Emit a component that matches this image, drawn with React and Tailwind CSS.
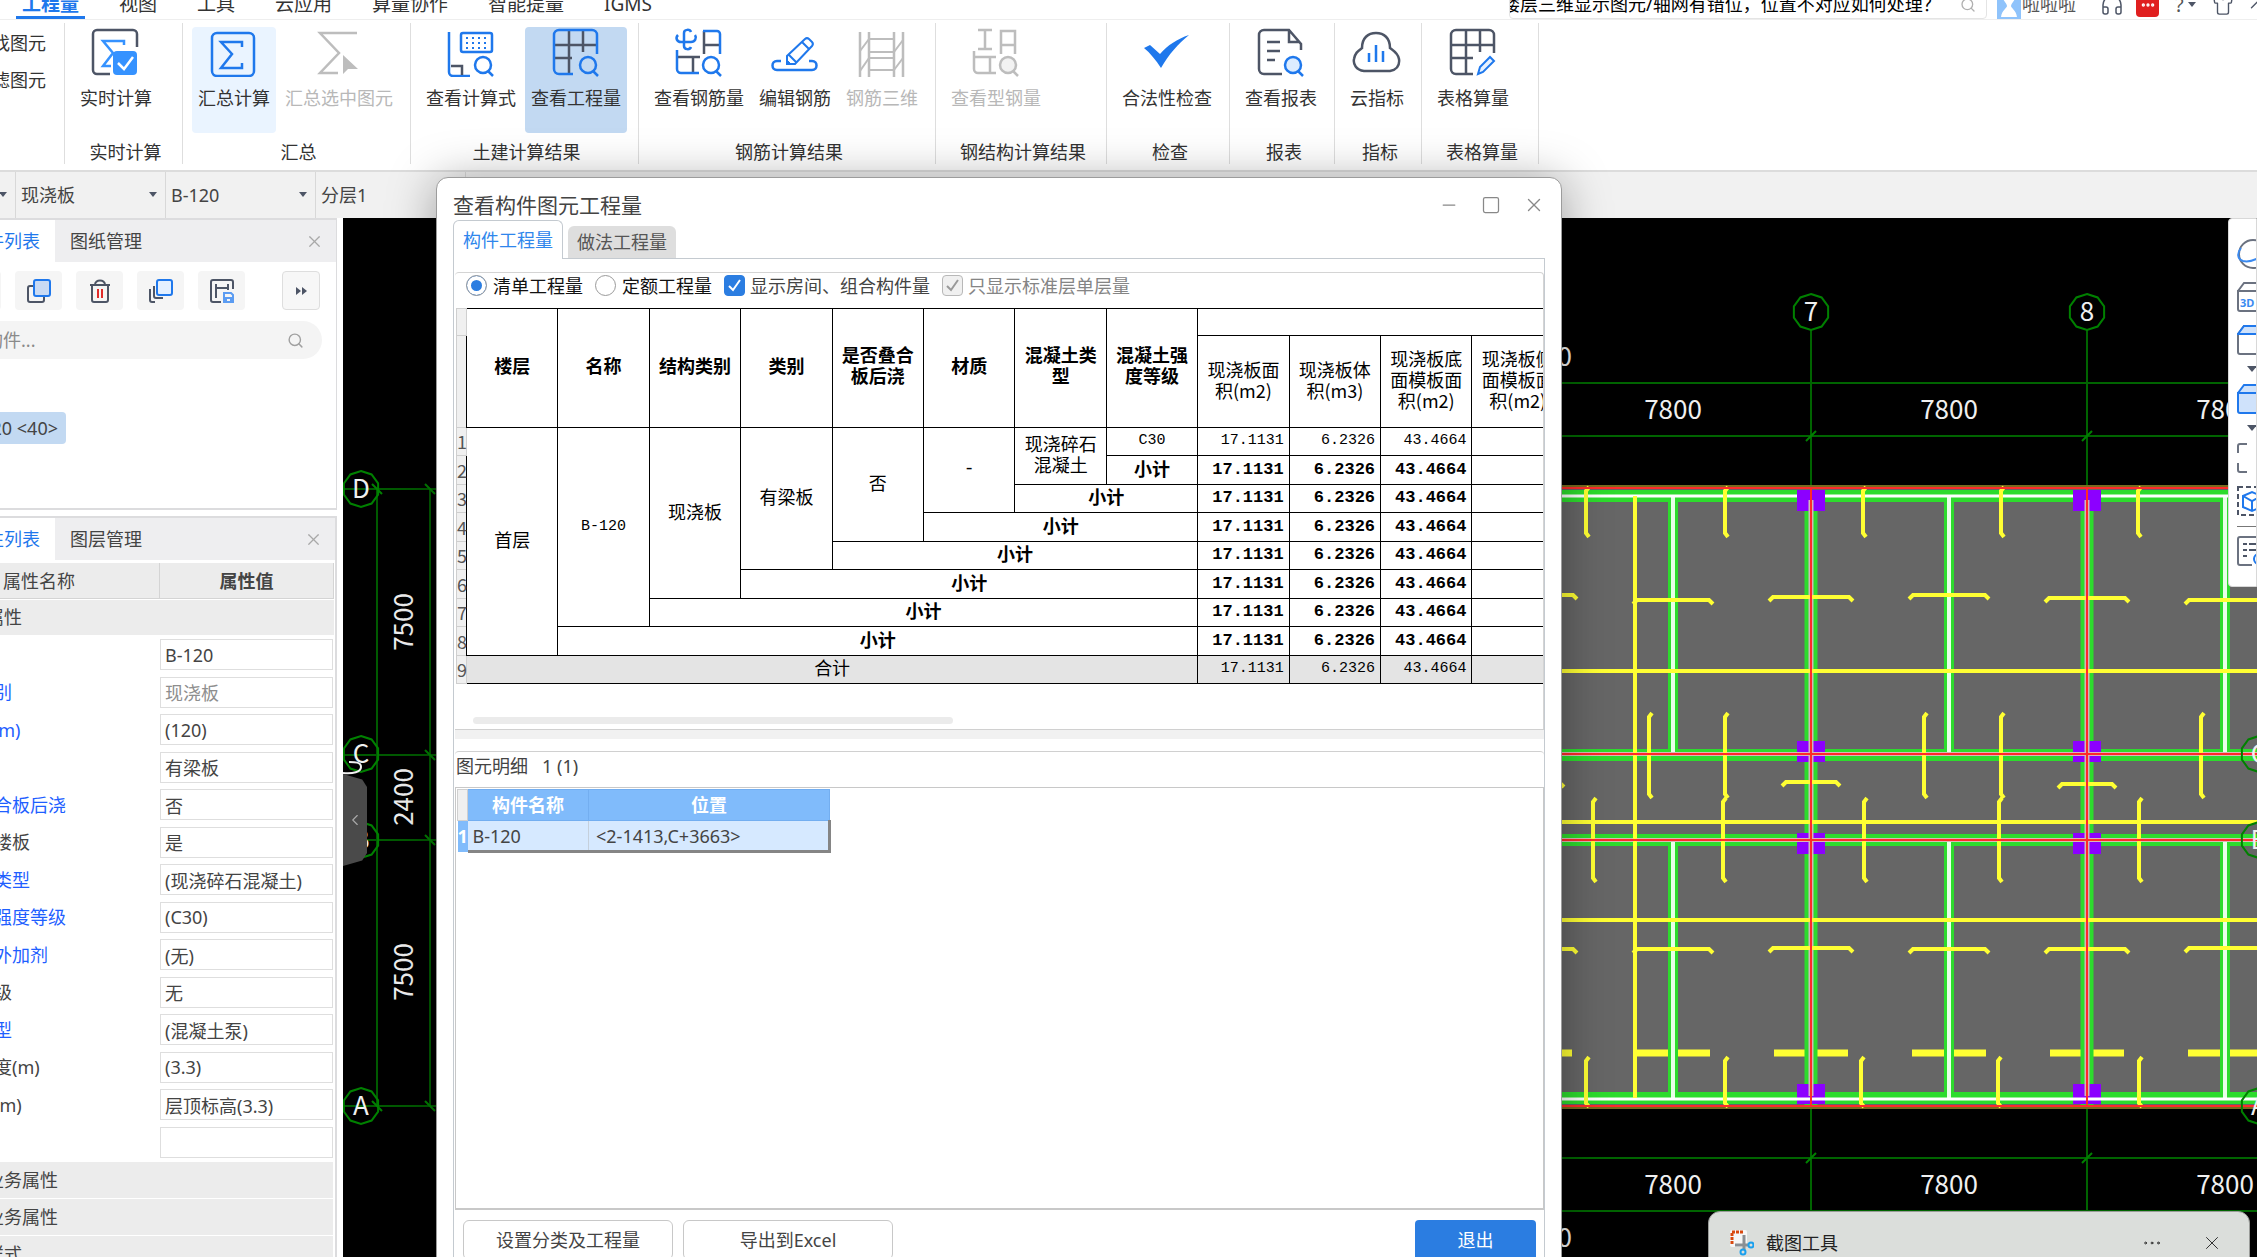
import { useState } from 'react';
import { Search, X, Minus, Square, Headphones, Shirt, ChevronUp, ChevronLeft, MoreHorizontal } from 'lucide-react';

const BLUE = '#1f78ec';
const DARK = '#4d5566';
const GRAY = '#bdbdbd';

const MENU = ['工程量', '视图', '工具', '云应用', '算量协作', '智能提量', 'IGMS'];

/* ---------- Ribbon icons ---------- */

function Lens({ color = BLUE, fill = 'none' }) {
  return (
    <>
      <circle cx="37" cy="38" r="8" stroke={color} fill={fill} />
      <path d="M42 44l5 5" stroke={color} />
    </>
  );
}

const ICONS = {
  realtime: (
    <>
      <path d="M46 20V7a4 4 0 0 0-4-4H6a4 4 0 0 0-4 4v36a4 4 0 0 0 4 4h13" stroke={DARK} />
      <path d="M33 18v-4H12l10 12-10 13h8" stroke="#3592ff" />
      <rect x="22" y="24" width="24" height="24" rx="4" fill="#3592ff" stroke="none" />
      <path d="M27 36l6 6 9-12" stroke="#fff" />
    </>
  ),
  sum: (
    <>
      <rect x="3" y="6" width="42" height="43" rx="5" stroke={BLUE} />
      <path d="M33 20v-5H12l11 12-11 14h21v-5" stroke={BLUE} />
    </>
  ),
  sumSelected: (
    <>
      <path d="M43 6H6l19 20L6 46h18" stroke={GRAY} />
      <path d="M29 28v19l5-5h10z" fill={GRAY} stroke="none" />
    </>
  ),
  formula: (
    <>
      <path d="M3 5v40a4 4 0 0 0 4 4h17" stroke={BLUE} />
      <path d="M5 39h11v9" stroke={DARK} />
      <rect x="15" y="6" width="31" height="19" rx="2" stroke={BLUE} />
      <path d="M20 11h22M20 16h22M20 21h22" stroke={BLUE} strokeWidth="2" strokeDasharray="2 4" />
      <Lens />
    </>
  ),
  quantity: (
    <>
      <path d="M18 3v44M32 3v22M3 18h42M3 31h18" stroke={DARK} />
      <path d="M46 27V8a5 5 0 0 0-5-5H8a5 5 0 0 0-5 5v34a5 5 0 0 0 5 5h14" stroke={BLUE} />
      <Lens />
    </>
  ),
  rebar: (
    <>
      <path d="M17 5c-1-3-7-3-7 1v13c0 4 6 4 7 1" stroke={BLUE} />
      <path d="M4 8c-3 3-1 7 3 7h10c4 0 6-4 4-7" stroke={BLUE} />
      <path d="M30 27V4M30 18h15" stroke={DARK} />
      <path d="M29 4h14a3 3 0 0 1 3 3v20" stroke={BLUE} />
      <path d="M3 30h23M19 30v15" stroke={DARK} />
      <path d="M3 23v19a4 4 0 0 0 4 4h18" stroke={BLUE} />
      <Lens />
    </>
  ),
  editRebar: (
    <>
      <path d="M17 37v-8L35 12a3 3 0 0 1 4 0l3 3a3 3 0 0 1 0 4L25 37zM32 15l7 7M19 28l7 7" stroke={BLUE} strokeWidth="2" />
      <path d="M17 37v-4l4 4z" fill={BLUE} stroke={BLUE} strokeWidth="1" />
      <path d="M11 34H7c-6 0-6 9 0 9h35c6 0 6-9 0-9h-3" stroke={BLUE} />
    </>
  ),
  rebar3d: (
    <>
      <path d="M3 5v45M12 5v45M37 5v45M46 5v45" stroke={GRAY} />
      <path d="M12 12h25M12 25h25M12 31h25M12 43h25M3 24l9-12M3 44l9-13M37 25l9-12M37 43l9-12" stroke={GRAY} strokeWidth="2" />
    </>
  ),
  steel: (
    <>
      <path d="M7 3h14M14 3v19M7 22h14M30 27V4h14v23M30 18h14" stroke={GRAY} />
      <path d="M3 24v18a4 4 0 0 0 4 4h18M3 30h22M19 30v16" stroke={GRAY} />
      <Lens color={GRAY} fill="#f2f2f2" />
    </>
  ),
  check: <path d="M2 21l6-3 10 9C26 18 35 12 47 8 36 17 27 27 19 41 14 33 8 26 2 21z" fill={BLUE} stroke="none" />,
  report: (
    <>
      <path d="M45 23v-6L33 3H8a5 5 0 0 0-5 5v34a5 5 0 0 0 5 5h18M33 3v12h11" stroke={DARK} />
      <path d="M11 15h13M11 24h13M11 33h8" stroke={DARK} />
      <Lens fill="#dcecff" />
    </>
  ),
  cloud: (
    <>
      <path d="M12 44C4 43 1 37 2 32c1-6 4-8 8-11C10 11 16 6 24 6s14 5 14 15c4 3 8 5 9 11 1 7-3 11-9 12z" stroke={DARK} />
      <path d="M17 26v9M24 18v17M31 24v11" stroke={BLUE} />
    </>
  ),
  sheet: (
    <>
      <path d="M18 3v44M32 3v22M3 18h42M3 31h22" stroke={DARK} />
      <path d="M46 26V8a5 5 0 0 0-5-5H8a5 5 0 0 0-5 5v34a5 5 0 0 0 5 5h17" stroke={DARK} />
      <path d="M30 47l2-7 10-10 4 4-11 11z" stroke={BLUE} strokeWidth="2" fill="#e8f2ff" />
    </>
  )
};

const GROUPS = [
  { label: '实时计算', width: 'w-[118px]', items: [{ label: '实时计算', icon: 'realtime' }] },
  {
    label: '汇总',
    width: 'w-[228px]',
    items: [
      { label: '汇总计算', icon: 'sum', bg: 'bg-[#eaf4ff]' },
      { label: '汇总选中图元', icon: 'sumSelected', disabled: true }
    ]
  },
  {
    label: '土建计算结果',
    width: 'w-[228px]',
    items: [
      { label: '查看计算式', icon: 'formula' },
      { label: '查看工程量', icon: 'quantity', bg: 'bg-[#c2d9f2]' }
    ]
  },
  {
    label: '钢筋计算结果',
    width: 'w-[297px]',
    items: [
      { label: '查看钢筋量', icon: 'rebar' },
      { label: '编辑钢筋', icon: 'editRebar' },
      { label: '钢筋三维', icon: 'rebar3d', disabled: true }
    ]
  },
  { label: '钢结构计算结果', width: 'w-[171px]', items: [{ label: '查看型钢量', icon: 'steel', disabled: true }] },
  { label: '检查', width: 'w-[123px]', items: [{ label: '合法性检查', icon: 'check' }] },
  { label: '报表', width: 'w-[105px]', items: [{ label: '查看报表', icon: 'report' }] },
  { label: '指标', width: 'w-[87px]', items: [{ label: '云指标', icon: 'cloud' }] },
  { label: '表格算量', width: 'w-[117px]', items: [{ label: '表格算量', icon: 'sheet' }] }
];

function TopBar() {
  return (
    <header className="-mt-4 flex h-9 shrink-0 items-center justify-between border-b border-[#eeeeee] bg-white">
      <nav className="flex h-full gap-7 pl-4 text-[19px]">
        {MENU.map((m, i) => (
          <button
            key={m}
            className={i === 0 ? 'border-b-[3px] border-[#1f78ec] px-1.5 pt-1.5 font-bold text-[#1f78ec]' : 'border-b-[3px] border-transparent px-1.5 pt-1.5 text-[#333]'}
          >
            {m}
          </button>
        ))}
      </nav>
      <div className="flex w-[748px] shrink-0 items-center overflow-hidden pt-1.5 text-[18px] text-[#555]">
        <div className="flex h-7 w-[478px] shrink-0 items-center overflow-hidden rounded border border-[#e4e4e4]">
          <input
            aria-label="搜索"
            className="-ml-2 min-w-0 flex-1 text-black outline-none"
            defaultValue="楼层三维显示图元/轴网有错位，位置不对应如何处理？"
          />
          <Search className="mr-2.5 shrink-0 text-[#b0b0b0]" size={16} />
        </div>
        <svg className="ml-2.5 shrink-0" width="24" height="28" viewBox="0 0 24 28">
          <rect width="24" height="28" fill="#8fc3fb" />
          <path d="M5 2h14c0 8-5 10-5 13 0 2 5 4 6 11H4c1-7 6-9 6-11 0-3-5-5-5-13z" fill="#fff" />
        </svg>
        <span className="ml-px shrink-0">啦啦啦</span>
        <Headphones className="ml-6 shrink-0 text-[#4d5566]" size={24} strokeWidth={1.5} />
        <span className="ml-3 flex h-6 w-[23px] shrink-0 items-center justify-center rounded bg-[#e01f1f]">
          <MoreHorizontal className="text-white" size={16} strokeWidth={3} />
        </span>
        <span className="ml-4 shrink-0 text-[20px]">?</span>
        <svg className="ml-1 shrink-0" width="8" height="6"><path d="M0 0h8L4 5z" fill={DARK} /></svg>
        <Shirt className="ml-4 shrink-0 text-[#4d5566]" size={22} strokeWidth={1.5} />
        <ChevronUp className="ml-3 shrink-0 text-[#4d5566]" size={22} strokeWidth={1.5} />
      </div>
    </header>
  );
}

function Ribbon() {
  return (
    <div className="flex h-[152px] shrink-0 overflow-hidden border-b-2 border-[#dcdcdc] bg-white pt-[3px] text-[18px] leading-5 text-[#333]">
      <div className="flex h-[141px] w-[65px] shrink-0 flex-col items-end gap-[17px] overflow-hidden border-r border-[#dedede] pt-2.5 pr-[18px]">
        <button className="whitespace-nowrap">查找图元</button>
        <button className="whitespace-nowrap">过滤图元</button>
      </div>
      {GROUPS.map(g => (
        <section key={g.label} className={`flex h-[141px] shrink-0 flex-col justify-between border-r border-[#dedede] pt-1 pb-0.5 ${g.width}`}>
          <div className="flex gap-[3px] pl-[9px]">
            {g.items.map(it => (
              <button
                key={it.label}
                disabled={it.disabled}
                className={`flex h-[106px] flex-col items-center gap-[11px] rounded px-1.5 whitespace-nowrap ${it.bg || ''} ${it.disabled ? 'text-[#b8b8b8]' : ''}`}
              >
                <svg width="50" height="50" viewBox="0 0 50 50" fill="none" strokeWidth="2.5">
                  {ICONS[it.icon]}
                </svg>
                {it.label}
              </button>
            ))}
          </div>
          <h2 className="pl-1 text-center whitespace-nowrap">{g.label}</h2>
        </section>
      ))}
    </div>
  );
}

function Combo({ value, label }) {
  return (
    <div className="relative w-[150px] border-r border-[#d8d8d8]">
      <select aria-label={label} className="h-full w-full appearance-none pl-[5px] text-[18px] text-[#444] outline-none">
        <option>{value}</option>
      </select>
      <svg className="pointer-events-none absolute top-5 right-2" width="8" height="6">
        <path d="M0 0h8L4 5z" fill={DARK} />
      </svg>
    </div>
  );
}

function ContextBar() {
  return (
    <div className="flex h-[46px] shrink-0 overflow-hidden bg-[#f1f1f1]">
      <div className="-ml-[134px] flex">
        <Combo value="板" label="构件类型" />
        <Combo value="现浇板" label="构件" />
        <Combo value="B-120" label="名称" />
        <Combo value="分层1" label="分层" />
      </div>
    </div>
  );
}

/* ---------- Left panels ---------- */

const PROPS = [
  { name: '名称', value: 'B-120' },
  { name: '结构类别', value: '现浇板', blue: true, muted: true },
  { name: '厚度(mm)', value: '(120)', blue: true },
  { name: '类别', value: '有梁板' },
  { name: '是否叠合板后浇', value: '否', blue: true },
  { name: '是否是楼板', value: '是' },
  { name: '混凝土类型', value: '(现浇碎石混凝土)', blue: true },
  { name: '混凝土强度等级', value: '(C30)', blue: true },
  { name: '混凝土外加剂', value: '(无)', blue: true },
  { name: '抗渗等级', value: '无' },
  { name: '泵送类型', value: '(混凝土泵)', blue: true },
  { name: '泵送高度(m)', value: '(3.3)' },
  { name: '顶标高(m)', value: '层顶标高(3.3)' },
  { name: '备注', value: '' }
];

function PanelTabs({ active, other }) {
  return (
    <div className="flex h-[42px] shrink-0 items-stretch bg-[#eeeef0]">
      <button className="w-[155px] bg-white pr-[15px] text-right text-[#1f78ec]">{active}</button>
      <button className="px-[15px]">{other}</button>
      <button aria-label="关闭" className="ml-auto pr-3 text-[#a8a8a8]"><X size={19} strokeWidth={1.5} /></button>
    </div>
  );
}

const toolBtn = 'flex h-[39px] w-[47px] items-center justify-center rounded bg-[#f5f5f5]';

function ComponentPanel() {
  return (
    <section className="flex h-[292px] shrink-0 flex-col border-t-2 border-r border-b-2 border-[#dcdcde] bg-white">
      <PanelTabs active="构件列表" other="图纸管理" />
      <div className="mt-[9px] flex gap-3.5 pr-4">
        <button aria-label="新建" className="h-[39px] w-[101px] rounded bg-[#f5f5f5]"></button>
        <button aria-label="复制" className={toolBtn}>
          <svg width="24" height="24" viewBox="0 0 24 24" fill="none" strokeWidth="2">
            <path d="M7 7H3a2 2 0 0 0-2 2v12a2 2 0 0 0 2 2h12a2 2 0 0 0 2-2v-4" stroke={DARK} />
            <rect x="7" y="1" width="16" height="16" rx="2" fill="#c9daf3" stroke={BLUE} />
          </svg>
        </button>
        <button aria-label="删除" className={toolBtn}>
          <svg width="24" height="24" viewBox="0 0 24 24" fill="none" strokeWidth="2">
            <path d="M2 6h20M7 6c0-6 10-6 10 0M4 6v15a2 2 0 0 0 2 2h12a2 2 0 0 0 2-2V6" stroke={DARK} />
            <path d="M10 10v9M14 10v9" stroke="#e02b2b" />
          </svg>
        </button>
        <button aria-label="层间复制" className={toolBtn}>
          <svg width="24" height="24" viewBox="0 0 24 24" fill="none" strokeWidth="2">
            <path d="M1 10v11a2 2 0 0 0 2 2h3M5 7v10a2 2 0 0 0 2 2h7" stroke={DARK} />
            <rect x="8" y="1" width="15" height="15" rx="2" fill="#e4f0ff" stroke={BLUE} />
          </svg>
        </button>
        <button aria-label="构件存档" className={toolBtn}>
          <svg width="24" height="24" viewBox="0 0 24 24" fill="none" strokeWidth="2">
            <path d="M23 10V3a2 2 0 0 0-2-2H3a2 2 0 0 0-2 2v18a2 2 0 0 0 2 2h8M6 5v14M18 5v6M6 9h12" stroke={DARK} />
            <path d="M14 14h7l2 2v7h-9zM16 23v-4h5v4" stroke="#5b9cf2" />
          </svg>
        </button>
        <button aria-label="更多" className="ml-auto flex h-[39px] w-[38px] items-center justify-center rounded border border-[#dedede] bg-[#f7f7f7]">
          <svg width="11" height="8"><path d="M0 0l5 4-5 4zM6 0l5 4-5 4z" fill={DARK} /></svg>
        </button>
      </div>
      <div className="mt-[11px] mr-3.5 ml-[30px] flex h-[38px] items-center rounded-full bg-[#f4f4f4] pr-[18px] pl-[19px]">
        <input aria-label="搜索构件" placeholder="搜索构件..." className="min-w-0 flex-1 outline-none placeholder:text-[#8a8a8a]" />
        <Search className="text-[#a0a0a0]" size={17} />
      </div>
      <button className="mt-[53px] h-8 w-[166px] rounded bg-[#c2d9f2] pr-2 text-right text-[#444]">B-120 &lt;40&gt;</button>
    </section>
  );
}

function PropertyPanel() {
  return (
    <section className="mt-1.5 flex flex-1 flex-col border-t-2 border-r-2 border-[#dcdcde] bg-white">
      <PanelTabs active="属性列表" other="图层管理" />
      <div className="mt-[3px] mr-px flex h-9 border-b border-[#d4d4d4] bg-[#ececec] leading-9">
        <div className="w-[260px] border-r border-[#d4d4d4] pl-[19px] text-center">属性名称</div>
        <div className="flex-1 border-r border-[#d4d4d4] text-center font-bold">属性值</div>
      </div>
      <h3 className="mt-px mr-px h-[35px] bg-[#ececec] pl-[50px] leading-[35px]">基本属性</h3>
      <div className="mt-px mb-px grid h-[525px] shrink-0 auto-rows-fr grid-cols-1">
        {PROPS.map((p, i) => (
          <div key={p.name} className="flex items-center">
            <label htmlFor={`prop-${i}`} className={`w-[260px] pl-10 ${p.blue ? 'text-[#1f5fff]' : ''}`}>{p.name}</label>
            <input
              id={`prop-${i}`}
              defaultValue={p.value}
              className={`mr-0.5 h-[31px] min-w-0 flex-1 border border-[#dedede] px-1 outline-none ${p.muted ? 'text-[#8e8e8e]' : ''}`}
            />
          </div>
        ))}
      </div>
      {['钢筋业务属性', '土建业务属性', '显示样式'].map(t => (
        <h3 key={t} className="mr-0.5 mb-px h-9 shrink-0 bg-[#ececec] pl-[50px] leading-9">{t}</h3>
      ))}
    </section>
  );
}

/* ---------- Drawing area ---------- */

const YELLOW = '#ffff33';
const BEAM = '#2ddb2d';
const AXIS = '#008000';
const AXES_X = [1811, 2087];
const MID_X = [1673, 1949, 2225];

// distribution bars with a short hook at both ends
const vBar = (x, y1, y2) => `M${x + 3} ${y1}l-3 4V${y2 - 4}l3 4`;
const hBar = (x1, x2, y) => `M${x1} ${y + 4}l4 -4H${x2 - 4}l4 4`;

const BARS = [
  ...[1586, 1725, 1863, 2001, 2138].map(x => vBar(x, 487, 537)),
  ...[1649, 1725, 1924, 2001, 2201].map(x => vBar(x, 713, 798)),
  ...[1593, 1723, 1864, 1999, 2139].map(x => vBar(x, 798, 882)),
  ...[1586, 1725, 1861, 1998, 2139].map(x => vBar(x, 1057, 1107)),
  hBar(1500, 1577, 595), hBar(1633, 1713, 600), hBar(1769, 1853, 597), hBar(1909, 1989, 595), hBar(2045, 2129, 598), hBar(2185, 2270, 600),
  hBar(1782, 1840, 782), hBar(2058, 2116, 784), hBar(1500, 1564, 783),
  hBar(1500, 1577, 949), hBar(1633, 1713, 949), hBar(1769, 1853, 948), hBar(1909, 1989, 949), hBar(2045, 2129, 949), hBar(2185, 2270, 948)
].join('');

function Bubble({ x, y, text }) {
  const pts = Array.from({ length: 10 }, (_, i) => {
    const a = (i * Math.PI) / 5 - Math.PI / 2;
    return `${x + 18 * Math.cos(a)},${y + 18 * Math.sin(a)}`;
  }).join(' ');
  return (
    <>
      <polygon points={pts} fill="none" stroke={AXIS} strokeWidth="2" />
      <text x={x} y={y + 9} textAnchor="middle">{text}</text>
    </>
  );
}

function Drawing() {
  return (
    <svg
      className="h-full w-full font-['Noto_Sans_CJK_SC',sans-serif] text-[26px]"
      viewBox="343 218 1914 1039"
      preserveAspectRatio="xMinYMin slice"
      fill="#f0f0f0"
    >
      {/* left axes */}
      <path d="M343 489h94M343 755h94M343 840h94M343 1106h94M377 489v617M430 489v617" stroke="#005a00" strokeWidth="2" />
      <path d="M372 484l10 10M425 484l10 10M425 750l10 10M425 835l10 10M372 1101l10 10M425 1101l10 10" stroke={AXIS} strokeWidth="2" />
      <Bubble x={361} y={489} text="D" />
      <Bubble x={361} y={754} text="C" />
      <Bubble x={361} y={840} text="B" />
      <Bubble x={361} y={1106} text="A" />
      {[[622, 7500], [797, 2400], [972, 7500]].map(([y, t]) => (
        <text key={y} transform={`translate(413 ${y}) rotate(-90)`} textAnchor="middle">{t}</text>
      ))}
      <path d="M343 773c10 1 18-1 18-6s-6-5-12-5" fill="none" stroke="#f0f0f0" strokeWidth="2" />

      {/* dimension lines */}
      <path d="M1500 383h760M1500 436h760M1500 1158h760M1500 1211h760" stroke="#006400" strokeWidth="2" />
      {AXES_X.map((x, i) => (
        <g key={x}>
          <path d={`M${x} 330V490M${x} 1105V1257`} stroke="#006400" strokeWidth="2" />
          <path d={`M${x - 5} 441l10-10M${x - 5} 1163l10-10`} stroke={AXIS} strokeWidth="2" />
          <Bubble x={x} y={312} text={i + 7} />
        </g>
      ))}
      {MID_X.map(x => (
        <g key={x} textAnchor="middle">
          <text x={x} y="419">7800</text>
          <text x={x} y="1194">7800</text>
        </g>
      ))}
      <text x="1572" y="366" textAnchor="end">7800</text>
      <text x="1572" y="1247" textAnchor="end">7800</text>

      {/* slab */}
      <rect x="1500" y="489" width="760" height="618" fill="#666" />
      <path
        d="M1500 1053h72M1635 1053h75M1774 1053h74M1912 1053h74M2050 1053h74M2188 1053h74"
        stroke={YELLOW}
        strokeWidth="7"
      />
      <path d="M1500 496h760M1500 755h760M1500 840h760M1500 1098h760" stroke={BEAM} strokeWidth="12" />
      {AXES_X.map(x => <path key={x} d={`M${x} 490v616`} stroke={BEAM} strokeWidth="13" />)}
      {MID_X.map(x => (
        <g key={x}>
          <path d={`M${x} 494v260M${x} 840v260`} stroke={BEAM} strokeWidth="10" />
          <path d={`M${x} 496v258M${x} 840v258`} stroke="#e8ffe8" strokeWidth="4" />
        </g>
      ))}
      {AXES_X.map(x => (
        <path key={x} d={`M${x - 14} 490h28v21h-28zM${x - 14} 741h28v21h-28zM${x - 14} 833h28v21h-28zM${x - 14} 1084h28v20h-28z`} fill="#8c00ff" />
      ))}
      <path d="M1500 496h297M1825 496h248M2101 496h160M1500 1099h760" stroke="#fff" strokeWidth="3" />
      <path d="M1500 754h760M1500 840h760" stroke="#d9b8b8" strokeWidth="4" />
      <path d="M1500 486h760M1500 1108h760" stroke="#7a6a1e" strokeWidth="2" />
      {AXES_X.map(x => <path key={x} d={`M${x} 500v596`} stroke="#d0b8b8" strokeWidth="5" />)}
      <path d="M1500 671h760M1500 822h760M1500 920h760M1635 496v602" stroke={YELLOW} strokeWidth="4" />
      <path d={BARS} fill="none" stroke={YELLOW} strokeWidth="4" />
      <path
        d="M1500 488h760M1500 754h760M1500 840h760M1500 1106h760M1811 489v617M2087 489v617"
        stroke="#ff2a2a"
        strokeWidth="2"
      />
      <Bubble x={2259} y={754} text="C" />
      <Bubble x={2259} y={840} text="B" />
      <Bubble x={2259} y={1106} text="A" />
    </svg>
  );
}

const BOX = 'M1 9v18a2 2 0 0 0 2 2h30V9zM1 9l6-8h28v8';

function ViewTools() {
  const btn = 'block h-[29px] w-9 shrink-0';
  return (
    <aside className="absolute top-0 right-0 flex h-[369px] w-[29px] flex-col overflow-hidden rounded-l border border-[#d8d8d8] bg-white pt-5 pl-2">
      <button aria-label="动态观察" className={btn}>
        <svg width="36" height="30" fill="none" strokeWidth="2">
          <circle cx="16" cy="15" r="14" stroke="#6b7280" />
          <path d="M4 9c-4 5-4 11 2 13 8 2 20-4 26-12" stroke="#3b8af0" />
        </svg>
      </button>
      <button aria-label="三维" className={`${btn} mt-3.5`}>
        <svg width="36" height="30" fill="none" strokeWidth="2">
          <path d={BOX} stroke="#6b7280" />
          <text x="3" y="25" fill="#3b8af0" className="text-[11px] font-bold">3D</text>
        </svg>
      </button>
      <button aria-label="俯视" className={`${btn} mt-3.5`}>
        <svg width="36" height="30" fill="none" strokeWidth="2">
          <path d={BOX} stroke="#6b7280" />
          <path d="M1 9l6-8h28v8z" fill="#cfe2fb" stroke={BLUE} />
        </svg>
      </button>
      <svg className="mt-3 mb-3 ml-2.5 shrink-0" width="12" height="6"><path d="M0 0h10L5 6z" fill={DARK} /></svg>
      <button aria-label="线框" className={btn}>
        <svg width="36" height="30" strokeWidth="2"><path d={BOX} fill="#cfe2fb" stroke={BLUE} /></svg>
      </button>
      <svg className="mt-3 mb-3 ml-2.5 shrink-0" width="12" height="6"><path d="M0 0h10L5 6z" fill={DARK} /></svg>
      <button aria-label="全屏" className={btn}>
        <svg width="36" height="30" fill="none" stroke="#6b7280" strokeWidth="2">
          <path d="M1 10V3a2 2 0 0 1 2-2h7M1 20v7a2 2 0 0 0 2 2h7M20 1h8M20 29h8" />
        </svg>
      </button>
      <button aria-label="局部三维" className={`${btn} mt-3.5`}>
        <svg width="36" height="30" fill="none" strokeWidth="2">
          <rect x="1" y="1" width="30" height="28" stroke={DARK} strokeDasharray="5 3" />
          <path d="M6 10l9-4 9 4v11l-9 4-9-4zM6 10l9 5 9-5M15 15v10" stroke={BLUE} />
        </svg>
      </button>
      <div className="mt-[11px] mb-[9px] h-px shrink-0 bg-[#777]"></div>
      <button aria-label="显示设置" className={btn}>
        <svg width="36" height="30" fill="none" strokeWidth="2">
          <path d="M30 1H3a2 2 0 0 0-2 2v24a2 2 0 0 0 2 2h12" stroke="#6b7280" />
          <path d="M6 8h4M12 8h14M6 14h4M12 14h12M6 20h4" stroke={DARK} />
          <circle cx="22" cy="23" r="5" stroke={BLUE} />
        </svg>
      </button>
    </aside>
  );
}

/* ---------- Quantity dialog ---------- */

const FIXED_COLS = ['楼层', '名称', '结构类别', '类别', '是否叠合板后浇', '材质', '混凝土类型', '混凝土强度等级'];
const QTY_COLS = ['现浇板面积(m2)', '现浇板体积(m3)', '现浇板底面模板面积(m2)', '现浇板侧面模板面积(m2)'];
const VALUES = ['17.1131', '6.2326', '43.4664', ''];
const mono = "font-['Liberation_Mono','Noto_Sans_CJK_SC',monospace]";
const cell = 'border border-black pb-0.5';
const gutter = 'border border-[#cfcfcf] bg-[#f0f0f0] p-0 text-left font-normal text-[#555]';

function QtyCells({ bold }) {
  return VALUES.map((v, i) => (
    <td key={i} className={`${cell} ${mono} pr-[5px] text-right ${bold ? 'text-[17px] font-bold' : 'text-[15px]'}`}>{v}</td>
  ));
}

function QtyTable() {
  const rowCls = 'h-7 even:h-[29px]';
  return (
    <table className="w-[1108px] table-fixed border-collapse font-['Noto_Sans_CJK_SC',sans-serif] text-[18px] leading-[21px] text-black">
      <colgroup><col className="w-2.5" /></colgroup>
      <thead>
        <tr className="h-[27px]">
          <td className={gutter}></td>
          {FIXED_COLS.map(c => <th key={c} rowSpan={2} className="border border-black px-px pb-1.5">{c}</th>)}
          <th colSpan={4} className={cell}></th>
        </tr>
        <tr className="h-[92px]">
          <td className={gutter}></td>
          {QTY_COLS.map(c => <th key={c} className="border border-black px-2 pb-1 font-normal">{c}</th>)}
        </tr>
      </thead>
      <tbody>
        <tr className={rowCls}>
          <th className={gutter}>1</th>
          <td rowSpan={8} className="border border-black pb-1 text-center">首层</td>
          <td rowSpan={7} className={`${cell} ${mono} text-center text-[15px]`}>B-120</td>
          <td rowSpan={6} className="border border-black pb-1 text-center">现浇板</td>
          <td rowSpan={5} className="border border-black pb-1 text-center">有梁板</td>
          <td rowSpan={4} className="border border-black pb-1 text-center">否</td>
          <td rowSpan={3} className={`${cell} ${mono} text-center`}>-</td>
          <td rowSpan={2} className="border border-black px-2 pb-1 text-center">现浇碎石混凝土</td>
          <td className={`${cell} ${mono} text-center text-[15px]`}>C30</td>
          <QtyCells />
        </tr>
        {[1, 2, 3, 4, 5, 6, 7].map(n => (
          <tr key={n} className={rowCls}>
            <th className={gutter}>{n + 1}</th>
            <td colSpan={n} className="border border-black pb-1 text-center font-bold">小计</td>
            <QtyCells bold />
          </tr>
        ))}
        <tr className={`${rowCls} bg-[#e4e4e4]`}>
          <th className={gutter}>9</th>
          <td colSpan={8} className="border border-black pb-1 text-center">合计</td>
          <QtyCells />
        </tr>
      </tbody>
    </table>
  );
}

function Check({ label, disabled, tone }) {
  return (
    <label className={`relative flex items-center gap-[5px] ${disabled ? 'text-[#858585]' : 'text-[#444]'}`}>
      <input
        type="checkbox"
        defaultChecked
        disabled={disabled}
        className={`size-[21px] appearance-none rounded-sm border ${disabled ? 'border-[#b8b8b8] bg-[#f0f0f0]' : 'border-[#2b7de1] bg-[#2b7de1]'}`}
      />
      <svg className="pointer-events-none absolute left-[3px]" width="15" height="15" viewBox="0 0 15 15" fill="none" stroke={tone} strokeWidth="2">
        <path d="M2 8l4 4 7-10" />
      </svg>
      {label}
    </label>
  );
}

function QuantityDialog() {
  const [mode, setMode] = useState('list');
  const radio = 'size-[21px] appearance-none rounded-full border border-[#9a9a9a] bg-white checked:bg-[#2b7de1] checked:shadow-[inset_0_0_0_4px_#fff]';

  return (
    <div role="dialog" aria-label="查看构件图元工程量" className="absolute top-[177px] -bottom-4 left-[436px] flex w-[1126px] flex-col rounded-xl border border-[#9c9c9c] bg-white px-4 text-[18px] leading-6 text-[#444] shadow-[0_4px_48px_rgba(0,0,0,0.35)]">
      <div className="flex h-[42px] shrink-0 items-center justify-between pt-3">
        <h1 className="text-[21px]">查看构件图元工程量</h1>
        <div className="flex gap-[22px] text-[#888]">
          <button aria-label="最小化"><Minus size={20} strokeWidth={1.5} /></button>
          <button aria-label="最大化"><Square size={20} strokeWidth={1.5} /></button>
          <button aria-label="关闭"><X size={22} strokeWidth={1.5} /></button>
        </div>
      </div>

      <div className="z-10 -mb-px flex h-[39px] shrink-0 items-end gap-[5px]">
        <button className="h-[39px] w-[110px] rounded-t-md border border-b-0 border-[#c4cad0] bg-white text-[#2f86ec]">构件工程量</button>
        <button className="mb-px h-8 w-[108px] rounded-t-md bg-[#dedede] text-[#555]">做法工程量</button>
      </div>

      <div className="flex min-h-0 flex-1 flex-col border border-[#c4cad0] pt-[13px] pl-px">
        <div className="rounded-t border-t border-r border-[#d4d4d4]">
          <div className="flex h-[35px] items-center pb-2.5 pl-[11px]">
            <label className="flex items-center gap-1.5 text-[#111]">
              <input type="radio" name="mode" checked={mode === 'list'} onChange={() => setMode('list')} className={radio} />
              清单工程量
            </label>
            <label className="ml-3 flex items-center gap-1.5 text-[#111]">
              <input type="radio" name="mode" checked={mode === 'quota'} onChange={() => setMode('quota')} className={radio} />
              定额工程量
            </label>
            <div className="ml-3 flex gap-3">
              <Check label="显示房间、组合构件量" tone="#fff" />
              <Check label="只显示标准层单层量" tone="#999" disabled />
            </div>
          </div>
          <div className="h-[421px] overflow-hidden pl-px">
            <QtyTable />
            <div className="mt-[33px] ml-[17px] h-[7px] w-[480px] rounded-full bg-[#ebebeb]"></div>
          </div>
        </div>
        <div className="h-2.5 shrink-0 border-t border-[#d0d0d0] bg-[#f1f1f1]"></div>

        <div className="mt-3 flex min-h-0 flex-1 flex-col rounded-t border-t border-[#d0d0d0]">
          <p className="h-[35px] shrink-0 pl-px leading-7">图元明细&nbsp;&nbsp; 1 (1)</p>
          <div className="flex-1 border border-b-2 border-[#c8c8c8] pt-px pl-px">
            <table className="w-[374px] table-fixed border-collapse">
              <thead>
                <tr className="h-[31px] bg-[#80bbfb] text-white">
                  <td className="w-2.5 border border-[#cfcfcf] bg-[#f0f0f0] p-0"></td>
                  <th className="w-[121px] border border-[#73aef0] p-0">构件名称</th>
                  <th className="border border-[#73aef0] p-0">位置</th>
                </tr>
              </thead>
              <tbody>
                <tr className="h-[31px] bg-[#d6e9ff]">
                  <th className="bg-[#80bbfb] p-0 text-white">1</th>
                  <td className="border-r border-b-[3px] border-r-[#c5d0dc] border-b-[#858585] pl-[5px]">B-120</td>
                  <td className="border-r-[3px] border-b-[3px] border-[#858585] pl-[7px]">&lt;2-1413,C+3663&gt;</td>
                </tr>
              </tbody>
            </table>
          </div>
        </div>

        <div className="mt-2.5 mb-[11px] flex h-10 shrink-0 gap-2.5 px-2">
          <button className="w-[210px] rounded-md border border-[#c8c8c8]">设置分类及工程量</button>
          <button className="w-[210px] rounded-md border border-[#c8c8c8]">导出到Excel</button>
          <button className="ml-auto w-[121px] rounded bg-[#2b7de1] text-white">退出</button>
        </div>
      </div>
    </div>
  );
}

function SnipToast() {
  return (
    <div className="absolute right-[7px] -bottom-4 flex h-[62px] w-[542px] items-center rounded-t-xl border border-[#9a9c99] bg-[#dbdedb] pt-0.5 pr-[26px] pl-[21px] text-[18px] text-[#222]">
      <svg width="24" height="26" viewBox="0 0 24 26" fill="none">
        <rect width="17" height="17" rx="2" fill="#f6f6f6" />
        <path d="M2 14V2h11" stroke="#d9480f" strokeWidth="3" strokeDasharray="3 1" />
        <path d="M14 5v15M5 15h14" stroke="#8a8f94" strokeWidth="3" />
        <circle cx="21" cy="15" r="2.5" stroke="#1aa0ee" strokeWidth="2" />
        <circle cx="13" cy="22" r="2.5" stroke="#1aa0ee" strokeWidth="2" />
      </svg>
      <span className="ml-3">截图工具</span>
      <button aria-label="更多" className="ml-auto"><MoreHorizontal size={22} strokeWidth={1} /></button>
      <button aria-label="关闭" className="ml-[38px]"><X size={22} strokeWidth={1} /></button>
    </div>
  );
}

export default function App() {
  return (
    <div className="relative flex h-screen flex-col overflow-hidden bg-white font-['Noto_Sans','Noto_Sans_CJK_SC',sans-serif]">
      <TopBar />
      <Ribbon />
      <ContextBar />
      <main className="flex min-h-0 flex-1">
        <div className="w-[337px] shrink-0 overflow-hidden">
          <div className="-ml-[100px] flex h-full flex-col text-[18px] leading-6 text-[#444]">
            <ComponentPanel />
            <PropertyPanel />
          </div>
        </div>
        <div className="relative ml-1.5 min-w-0 flex-1 overflow-hidden bg-black">
          <Drawing />
          <button
            aria-label="收起"
            className="absolute top-[556px] left-0 flex h-[92px] w-6 items-center justify-center bg-[#4a4a4a] text-[#aaa] [clip-path:polygon(0_0,80%_6%,100%_14%,100%_86%,80%_94%,0_100%)]"
          >
            <ChevronLeft size={18} strokeWidth={1.5} />
          </button>
          <ViewTools />
        </div>
      </main>
      <QuantityDialog />
      <SnipToast />
    </div>
  );
}
